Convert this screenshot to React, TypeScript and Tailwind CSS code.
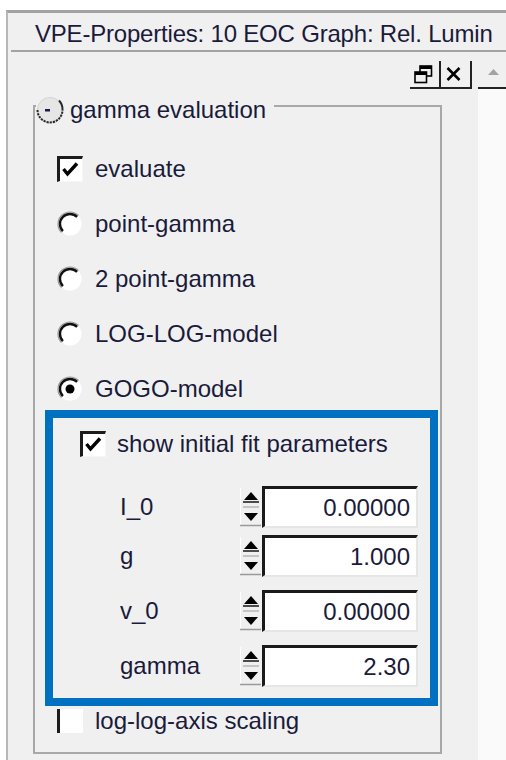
import React from "react";

function CheckBox({ checked }: { checked: boolean }) {
  return (
    <div className="h-[26px] w-[26px] shrink-0 border-b border-l-[3px] border-r border-t-[3px] border-b-[#f6f6f6] border-l-[#1c1c1c] border-r-[#f6f6f6] border-t-[#1c1c1c] bg-white">
      {checked && (
        <svg width="22" height="22" viewBox="0 0 22 22">
          <polyline points="3.5,10 7.5,15 17,4.5" fill="none" stroke="#000" strokeWidth="3.4" strokeLinejoin="miter" />
        </svg>
      )}
    </div>
  );
}

function Radio({ checked }: { checked?: boolean }) {
  return (
    <svg width="26" height="26" viewBox="0 0 26 26" className="shrink-0">
      <circle cx="13" cy="13" r="11.5" fill="#fff" />
      <path d="M21.5 4.5 A12 12 0 0 0 4.5 21.5" fill="none" stroke="#9a9a9a" strokeWidth="1.2" />
      <path d="M20.1 5.9 A10 10 0 0 0 5.9 20.1" fill="none" stroke="#111" strokeWidth="2.4" />
      {checked && <circle cx="13" cy="13" r="4.5" fill="#000" />}
    </svg>
  );
}

function CaptionToggle() {
  return (
    <svg width="28" height="28" viewBox="0 0 28 28" className="shrink-0">
      <circle cx="14" cy="14" r="12.5" fill="#e6e6e6" stroke="#d2d2d2" strokeWidth="1" />
      <path d="M1.5 14 A12.5 12.5 0 0 0 26.5 14" fill="none" stroke="#2a2a2a" strokeWidth="2" strokeDasharray="2.2 1" />
      <path d="M23 4.5 A12.5 12.5 0 0 1 26.5 14" fill="none" stroke="#2a2a2a" strokeWidth="2" />
      <rect x="9" y="13" width="5" height="2.5" fill="#1a1a4a" />
    </svg>
  );
}

function Spinner() {
  return (
    <svg width="22" height="42" viewBox="0 0 22 42" className="shrink-0">
      <rect x="0" y="0" width="22" height="42" fill="#f0f0f0" />
      <line x1="0.5" y1="2" x2="0.5" y2="40" stroke="#ffffff" strokeWidth="1" />
      <polygon points="4,14 18,14 11,6" fill="#000" />
      <line x1="3" y1="16" x2="19" y2="16" stroke="#222" strokeWidth="1.6" />
      <line x1="3" y1="21" x2="19" y2="21" stroke="#a8a8a8" strokeWidth="1.2" />
      <polygon points="4,27 18,27 11,35" fill="#000" />
      <line x1="0" y1="39.5" x2="21" y2="39.5" stroke="#9a9a9a" strokeWidth="1.5" />
    </svg>
  );
}

function ParamRow({ label, value, className }: { label: string; value: string; className: string }) {
  return (
    <div className={`flex h-[42px] items-center ${className}`}>
      <div className="w-[120px]">{label}</div>
      <Spinner />
      <div className="flex h-[42px] w-[156px] items-center justify-end border-b-2 border-l-[3px] border-r-2 border-t-[3px] border-b-[#e6e6e6] border-l-[#1a1a1a] border-r-[#e6e6e6] border-t-[#1a1a1a] bg-white pr-[6px]">
        {value}
      </div>
    </div>
  );
}

function OptionRow({ children, label }: { children: React.ReactNode; label: string }) {
  return (
    <div className="flex h-[28px] items-center gap-[12px]">
      {children}
      <span>{label}</span>
    </div>
  );
}

export default function App() {
  return (
    <div className="h-[760px] w-[506px] overflow-hidden bg-white pl-[6px] pt-[10px] font-['Liberation_Sans',Arial,sans-serif] text-[24px] leading-[24px] text-[#1a1a3a]">
      <div className="flex h-[750px] flex-col border-l-2 border-t-[3px] border-l-[#b8b8b8] border-t-[#a2a2a2] bg-[#f0f0f0]">
        {/* window caption */}
        <div className="h-[37px] w-[486px] overflow-hidden whitespace-nowrap pl-[27px] pt-[9px] tracking-[-0.2px]">
          VPE-Properties: 10 EOC Graph: Rel. Lumin
        </div>
        <div className="ml-[3px] h-[2px] bg-[#a3a3a3]" />

        <div className="flex flex-1">
          {/* property pane */}
          <div className="w-[470px]">
            <div className="mt-[9px] flex h-[28px] justify-end pr-[6px]">
              <div className="flex w-[31px] items-center justify-center border-b-2 border-r-2 border-[#222] pr-[3px]">
                <svg width="19" height="19" viewBox="0 0 19 19">
                  <rect x="6" y="1" width="11.5" height="10" fill="none" stroke="#000" strokeWidth="1.6" />
                  <rect x="6" y="1" width="11.5" height="3" fill="#000" />
                  <rect x="1" y="7" width="11.5" height="10.5" fill="#f0f0f0" stroke="#000" strokeWidth="1.6" />
                  <rect x="1" y="7" width="11.5" height="3" fill="#000" />
                </svg>
              </div>
              <div className="flex w-[31px] items-center justify-center border-b-2 border-r-2 border-[#222] pr-[4px]">
                <svg width="15" height="14" viewBox="0 0 15 14">
                  <path d="M1.5 1 L13.5 13 M13.5 1 L1.5 13" stroke="#000" strokeWidth="2.6" />
                </svg>
              </div>
            </div>

            {/* group box */}
            <div className="ml-[25px] mt-[16px] w-[409px] border-2 border-[#a8a8a8] pb-[18px]">
              <div className="-mt-[11px] ml-[1px] flex h-[28px] w-fit items-center gap-[6px] bg-[#f0f0f0] pr-[8px]">
                <CaptionToggle />
                <span>gamma evaluation</span>
              </div>

              <div className="mt-[31px] flex flex-col gap-[27px] pl-[22px]">
                <OptionRow label="evaluate">
                  <CheckBox checked />
                </OptionRow>
                <OptionRow label="point-gamma">
                  <Radio />
                </OptionRow>
                <OptionRow label="2 point-gamma">
                  <Radio />
                </OptionRow>
                <OptionRow label="LOG-LOG-model">
                  <Radio />
                </OptionRow>
                <OptionRow label="GOGO-model">
                  <Radio checked />
                </OptionRow>
              </div>

              {/* fit parameter block */}
              <div className="ml-[10px] mt-[7px] w-[393px] border-[8px] border-[#0070c0] pb-[11px]">
                <div className="mt-[12px] flex h-[28px] items-center gap-[11px] pl-[27px]">
                  <CheckBox checked />
                  <span>show initial fit parameters</span>
                </div>
                <div className="pl-[67px]">
                  <ParamRow label="I_0" value="0.00000" className="mt-[28px]" />
                  <ParamRow label="g" value="1.000" className="mt-[7px]" />
                  <ParamRow label="v_0" value="0.00000" className="mt-[13px]" />
                  <ParamRow label="gamma" value="2.30" className="mt-[13px]" />
                </div>
              </div>

              <div className="mt-[2px] flex h-[26px] items-center gap-[12px] pl-[22px]">
                <div className="h-[24px] w-[26px] border-l-[3px] border-l-[#1c1c1c] bg-white" />
                <span>log-log-axis scaling</span>
              </div>
            </div>
          </div>

          {/* scroll bar */}
          <div className="flex flex-1 flex-col">
            <div className="mt-[9px] flex h-[28px] items-center justify-center border-b-2 border-[#222] pb-[4px] pl-[2px]">
              <svg width="11" height="6" viewBox="0 0 11 6">
                <polygon points="0,6 11,6 5.5,0" fill="#a3a3a3" />
              </svg>
            </div>
            <div className="flex-1 bg-[#fafafa]" />
          </div>
        </div>
      </div>
    </div>
  );
}
